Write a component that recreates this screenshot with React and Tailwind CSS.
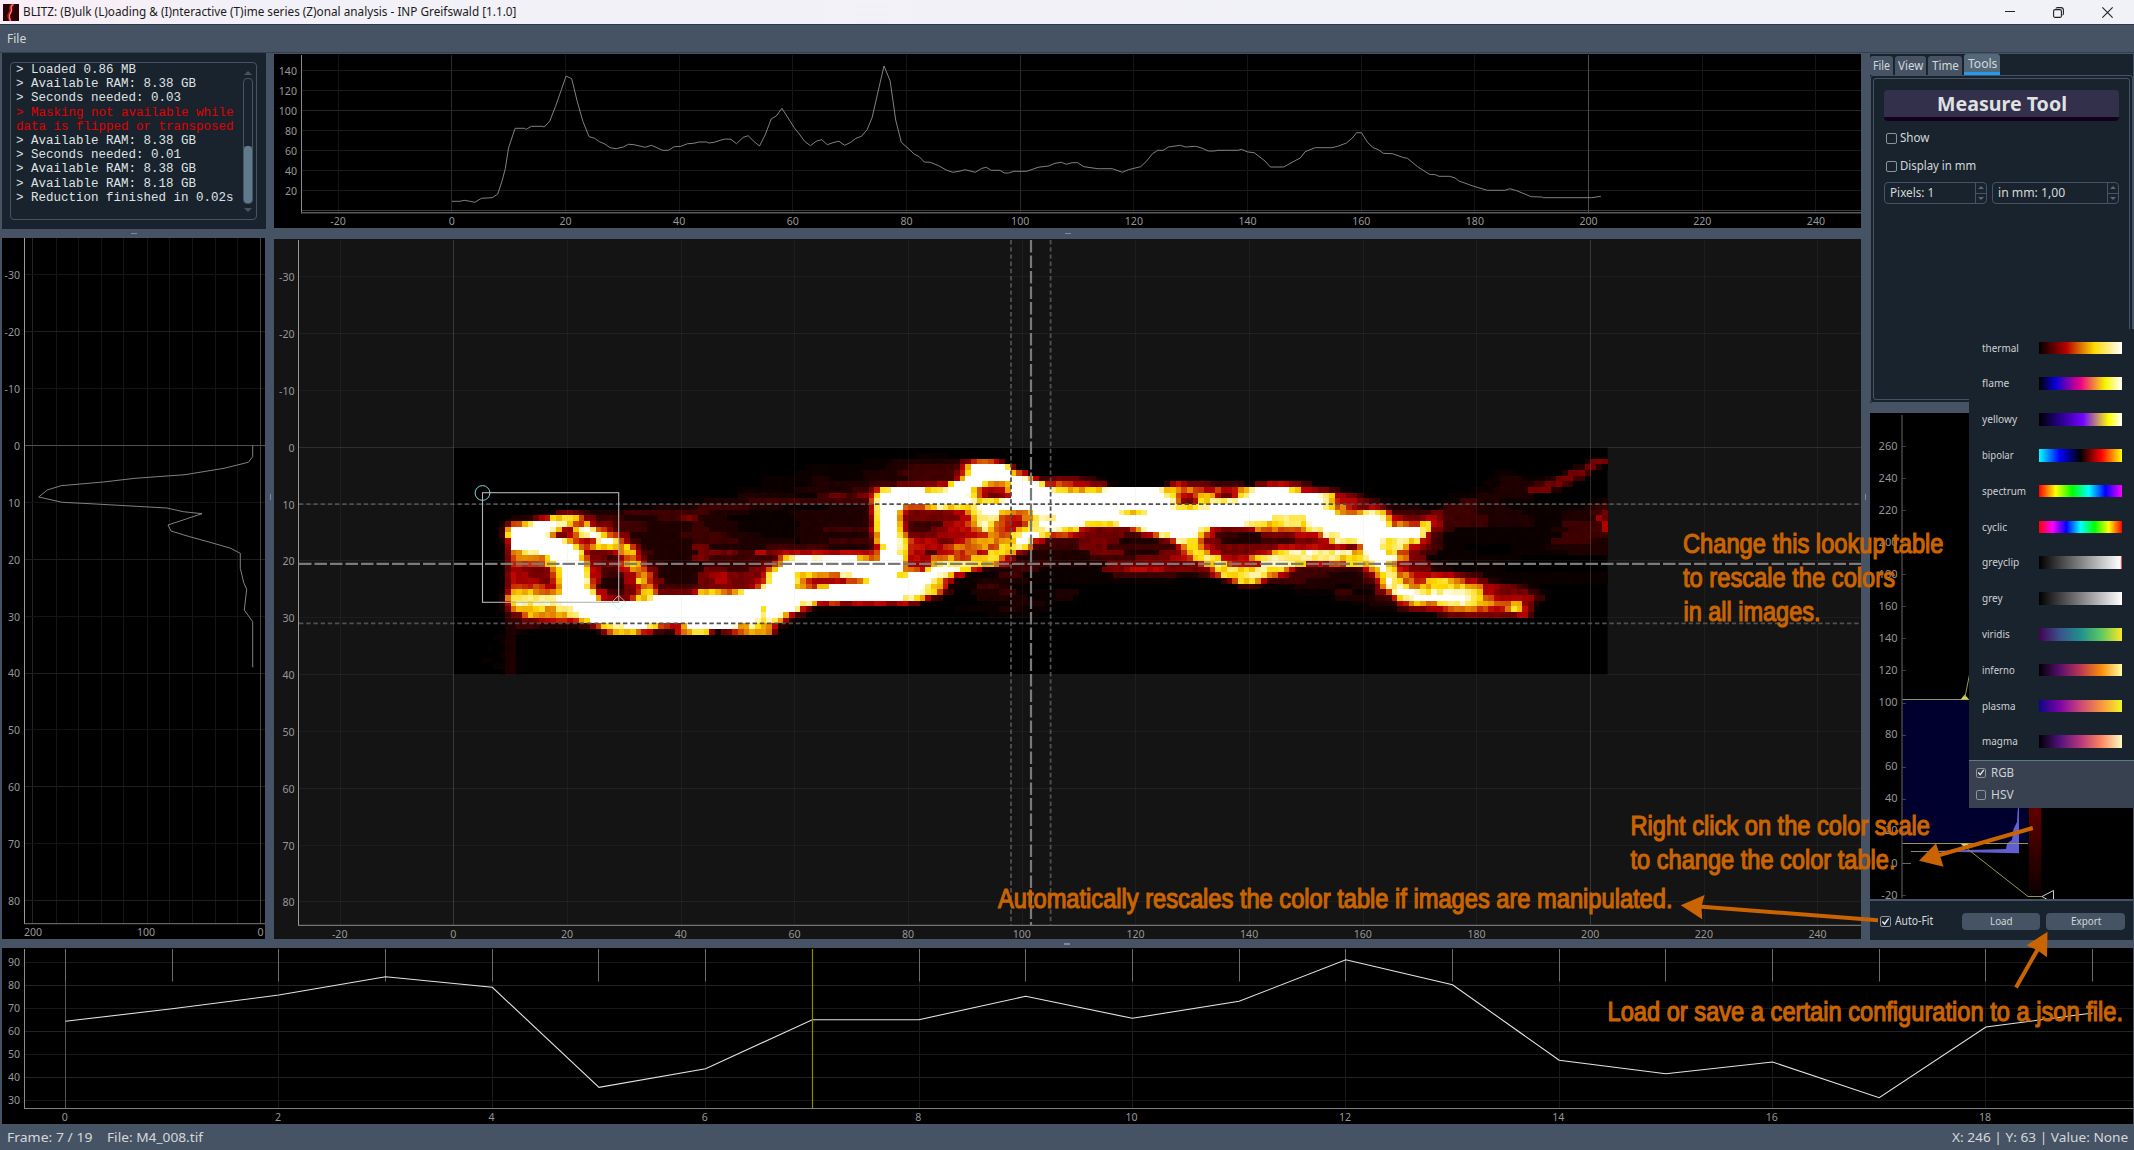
import React, { useLayoutEffect, useRef } from "react";

const UI = "'Noto Sans', 'Open Sans', sans-serif";

/* Text squeezed or stretched horizontally to a given pixel width. */
function Fit({ w, className = "", children }) {
  const ref = useRef(null);
  useLayoutEffect(() => {
    const el = ref.current;
    el.style.transform = "none";
    el.style.transform = `scaleX(${w / el.offsetWidth})`;
  }, [w]);
  return (
    <span className={"inline-block " + className} style={{ width: w }}>
      <span ref={ref} className="inline-block origin-left whitespace-pre">
        {children}
      </span>
    </span>
  );
}

const range = (a, b, s) => {
  const out = [];
  for (let v = a; v <= b; v += s) out.push(v);
  return out;
};

function Label({ x, y, anchor = "middle", fill = "#969696", size = 10.6, children }) {
  return (
    <text x={x} y={y + 3.9} textAnchor={anchor} fontSize={size} fill={fill} fontFamily={UI}>
      {children}
    </text>
  );
}

/* ---------- horizontal profile ---------- */
const H_A = [[376,484],[392,484],[400,481],[412,484],[421,487],[434,475],[455,473],[466,462],[475,420],[481,385],[487,324],[500,265],[518,265],[522,268],[532,259],[553,259],[557,261],[568,243],[579,200],[590,152],[600,108],[611,116],[622,185],[633,245],[645,290],[656,295],[665,305],[676,312],[686,323],[698,326],[712,321],[722,313],[733,314],[755,322],[767,316],[778,323],[789,331],[800,331],[812,320],[825,319],[838,311],[850,310],[860,306],[875,306],[880,309],[890,307],[902,301],[912,297],[923,298],[934,311],[947,292],[957,287],[967,303],[979,318],[990,285],[1002,237],[1012,228],[1023,205],[1035,234],[1047,263],[1057,282],[1068,305],[1079,317],[1090,304],[1101,299],[1112,314],[1125,307],[1135,304],[1146,316],[1158,307],[1168,295],[1179,289],[1190,269],[1200,232],[1212,150],[1223,78],[1235,122],[1246,240],[1257,307],[1270,325],[1282,342],[1292,350],[1302,366],[1314,367],[1330,377],[1345,390],[1358,397],[1370,394],[1382,389],[1402,397],[1415,385],[1424,382],[1433,391],[1450,391],[1459,399],[1467,399],[1478,394],[1503,394],[1525,382]];
const H_B = [[0,381],[16,378],[28,370],[40,367],[49,373],[60,368],[70,368],[82,380],[108,386],[135,386],[154,397],[165,389],[188,380],[198,365],[210,341],[220,331],[230,331],[240,321],[262,316],[272,321],[290,319],[302,324],[314,333],[325,333],[332,331],[370,331],[376,328],[388,336],[400,338],[420,363],[430,381],[455,381],[475,363],[486,354],[495,335],[514,323],[545,323],[556,319],[572,309],[583,294],[591,278],[600,278],[612,308],[622,323],[632,329],[641,340],[658,341],[677,352],[686,355],[705,380],[727,403],[738,404],[745,409],[765,409],[775,414],[782,423],[810,439],[835,451],[868,451],[877,446],[890,452],[917,470],[937,471],[940,473],[1030,473],[1047,469]];
const H_POINTS = [
  ...H_A.map(([x, y]) => [260 + x / 1.96, 40 + y / 3]),
  ...H_B.map(([x, y]) => [1040 + x / 1.867, 40 + y / 3]),
];
const toPts = (a) => a.map(([x, y]) => x.toFixed(1) + "," + y.toFixed(1)).join(" ");

function HorizontalProfile() {
  const X = (v) => 451.8 + v * 5.684;
  const Y = (v) => 210.4 - v;
  return (
    <svg className="block bg-black" width="1587" height="174" viewBox="274 54 1587 174">
      {range(20, 140, 20).map((v) => (
        <g key={v}>
          <path d={`M301 ${Math.round(Y(v)) + 0.5}H1861`} stroke={v === 100 ? "#262626" : "#1b1b1b"} />
          <Label x={297} y={Y(v) + 0.3} anchor="end">{v}</Label>
        </g>
      ))}
      {range(-20, 240, 20).map((v) => (
        <g key={v}>
          <path d={`M${Math.floor(X(v)) + 0.5} 55V213`} stroke={v === 200 ? "#4c4c4c" : v === 0 || v === 100 ? "#2a2a2a" : "#161616"} />
          <Label x={X(v)} y={221.4}>{v}</Label>
        </g>
      ))}
      <path d="M301 210.5H1861" stroke="#3c3c3c" />
      <path d="M301.5 55V213.5" stroke="#8a8a8a" />
      <path d="M301 212.7H1861" stroke="#585858" strokeWidth="1.4" />
      <polyline points={toPts(H_POINTS)} fill="none" stroke="#8e8e8e" strokeWidth="0.9" />
    </svg>
  );
}

/* ---------- vertical profile ---------- */
const V_POINTS = [[758,676],[758,710],[745,727],[672,745],[555,764],[405,775],[310,786],[183,797],[142,810],[116,831],[187,847],[270,851],[500,864],[550,875],[606,881],[504,915],[513,933],[565,949],[630,967],[690,984],[721,1000],[721,1045],[731,1088],[740,1108],[733,1170],[758,1205],[758,1342]].map(([x, y]) => [x / 3, 220 + y / 3]);

function VerticalProfile() {
  const Y = (v) => 445.4 + v * 5.69;
  return (
    <svg className="block bg-black" width="263" height="701" viewBox="2 238 263 701">
      {[32.7, 56.2, 78.7, 101, 123.3, 147.3, 169.3, 192.3, 215.3, 237.7].map((x) => (
        <path key={x} d={`M${Math.floor(x) + 0.5} 238V924`} stroke={x === 32.7 ? "#262626" : "#151515"} />
      ))}
      {range(-30, 80, 10).map((v) => (
        <g key={v}>
          <path d={`M25 ${Math.floor(Y(v)) + 0.5}H265`} stroke={v === 0 ? "#505050" : v % 20 === 0 ? "#1e1e1e" : "#141414"} />
          <Label x={20} y={Y(v) + 0.5} anchor="end">{v}</Label>
        </g>
      ))}
      <path d="M260.5 238V924" stroke="#484848" />
      <path d="M24.5 238V924" stroke="#9a9a9a" />
      <path d="M24 923.7H265" stroke="#7a7a7a" />
      <Label x={33} y={932.3}>200</Label>
      <Label x={146} y={932.3}>100</Label>
      <Label x={260.5} y={932.3}>0</Label>
      <polyline points={toPts(V_POINTS)} fill="none" stroke="#8e8e8e" strokeWidth="0.9" />
    </svg>
  );
}

/* ---------- image data: start column + intensity letter ---------- */
const LEVEL = { a: 0, b: 2, c: 5.5, d: 11, e: 21, f: 32, g: 41, h: 50, i: 59, j: 67, k: 85, w: 118 };
const ROWS = [
  "0a",
  "0a 81b 84b 87a",
  "0a 72b 77c 79c 89e 91g 92h 95f 96e 97a 199c 200e 202e",
  "0a 62b 76c 80d 89f 90i 91w 97j 98e 99a 197c 199e 201c 202a",
  "0a 60b 66b 72c 78d 88e 89g 90j 91w 98j 99h 100f 101a 183b 187a 195c 196e 199d 200a",
  "0a 54b 63c 66b 72c 80d 88f 89i 90w 100k 101j 102f 103d 105e 110d 113b 115a 182b 184c 188b 192c 194e 197d 199a",
  "0a 54b 63c 73d 76d 78e 85f 87i 88w 93i 94h 96h 97j 98w 103j 104f 105g 109f 112e 115b 117a 125c 126f 129e 133d 139b 141e 143f 147e 149d 151a 181b 184c 190d 192e 195d 197a",
  "0a 50b 60c 70d 73e 74g 75j 77w 83j 85k 87w 91i 92g 93f 97h 98w 105k 106j 108i 111j 114k 116w 124k 125i 128h 130g 132f 134h 135f 137f 138i 140k 141w 147j 149f 152e 154d 156b 158a 179b 183c 189e 193c 195a",
  "0a 50c 60b 64d 66e 69d 71e 73f 74j 75w 90k 91j 92h 93f 94e 97f 98w 125k 126j 127h 128f 130g 131j 132i 134f 135e 137f 138j 139k 140w 152k 154j 155f 157e 159d 160b 162a 175b 180c 184c 190a",
  "0a 40b 44c 52d 73g 74k 75w 91k 92j 96k 97w 126k 127h 128e 130f 131j 133k 138w 153k 154i 155f 159e 161d 163b 166a 174b 177d 180c 184b 190a 200b 202c",
  "0a 30b 35c 43d 52c 58b 66c 73f 74k 75w 79g 80g 83i 85k 87j 91k 93w 126k 127j 131k 133w 153k 154i 155h 157f 159e 161f 163e 164c 170b 174d 180c 186b 197b 199c 201d",
  "0a 14b 18e 22d 24c 30d 45c 52b 59c 64c 73f 74j 75w 78i 79f 80e 88f 90h 91k 93w 96j 98h 101j 102w 117k 118j 121k 122w 155j 156h 159i 160k 163j 164f 165d 170d 172e 174d 180c 188b 195c 200d 202e",
  "0a 10c 14e 15f 17j 21j 22g 23e 25d 30c 36d 40e 43c 48b 60c 73e 74j 75w 78h 79e 82e 86e 89f 91i 92k 95k 96g 98f 100h 102j 103k 106w 144k 149j 150w 163k 164i 165f 167e 169e 171f 173e 174d 182c 190b 195c 201f 202e",
  "0a 8b 9e 10h 12j 13k 14w 18k 20j 21g 23i 24f 25e 28d 34c 42d 44c 50b 61c 73e 74j 75w 78i 79f 80d 83d 86f 90h 92k 94k 95h 97f 100g 101j 103w 110k 111j 117w 139k 141j 146k 149i 150k 151w 164j 165g 166h 168g 170i 171k 172f 174d 182c 190b 195d 202f",
  "0a 8c 9i 10w 17k 18i 19f 20e 21i 22k 23w 24k 25g 27f 28d 34c 42d 45c 50b 60c 65d 73f 74j 75w 78i 79f 80d 84e 87f 91h 93k 94j 95g 98f 99j 101k 102k 104k 107j 110f 112e 119g 120i 121k 122w 131k 132j 133f 135e 140f 141h 145g 149h 150j 151k 153w 170k 171j 172e 174d 176b 190b 193c 196d 202f",
  "0a 8c 9j 10w 16k 17i 18e 20f 21h 22k 24w 25k 26i 27g 29e 31c 40d 48c 54b 60c 73e 74h 75w 78j 79h 80e 85f 92g 94i 96g 98j 99k 100w 103k 104j 105g 108f 110e 115e 118d 121f 123h 124k 126w 130k 131j 132g 133f 134d 138c 142e 148f 151f 152h 153k 156w 170k 171f 172d 174b 190b 195d",
  "0a 8b 9f 10w 19k 20i 21g 22f 25k 26w 28j 29h 30f 31d 33c 42d 50c 60b 61c 66d 74h 75w 78k 79i 80g 81f 85e 88f 90h 92i 95h 97j 99w 101k 102f 104d 110e 117c 124e 126g 127k 129j 131g 132e 135c 142d 148e 152f 154i 155k 158k 160w 163k 164j 166k 168j 169k 170f 172d 174b 190b 193d 200c",
  "0a 9e 10w 21j 22g 24h 25j 28i 30j 31g 32e 33c 42e 45c 55d 66c 73d 74f 75j 76w 78k 79j 80g 82f 86g 88i 90h 92i 94g 96j 98k 100j 101h 102d 110e 115d 124d 127f 128i 129j 131h 132f 134e 145f 149f 154f 157e 159g 160w 163k 164j 165k 167i 168f 170e 172d 174b 178a 186b 192c 200c",
  "0a 9e 10i 12k 15w 22j 23f 24e 28f 29i 31i 32f 33d 35c 43e 50d 53f 55e 57f 62f 68f 73g 75w 78k 79j 80f 83d 85f 88g 90h 92f 94j 96j 98i 99e 101c 105c 112e 118c 124e 127e 128g 129j 131j 132i 133f 135e 141f 144i 145j 147k 150w 151k 158i 160k 161w 164j 165k 166g 168e 170d 173b 180a 186b 196c",
  "0a 9e 10h 16i 17w 22j 23g 24e 27d 29f 30h 32g 33e 34c 42e 45d 54d 57g 58i 59k 60w 63k 65w 71i 72h 74g 75w 79i 80f 83f 84h 87i 88g 91i 94j 96h 97f 98e 99c 112d 120e 126f 128f 129g 130j 132k 134j 135f 138f 140h 141j 143k 152k 156j 160k 161w 165k 166h 168e 171b 188a",
  "0a 9e 10g 14g 16i 17j 18w 23h 24e 27e 29g 30j 31i 33f 34d 37c 44d 48d 54e 56g 57h 58w 79g 80f 83f 84j 85k 88k 90k 91j 95h 96f 98d 105c 115e 124e 127e 129e 131g 132j 134k 135j 136g 138f 141f 142k 146k 148j 150f 154g 157j 160j 162w 164j 165h 166f 168e 172c 175b 185a",
  "0a 9e 10f 12e 14e 17h 18j 19w 23j 24f 26d 29f 31i 32h 34e 36c 44e 48d 52e 55g 56i 57w 79h 81g 82f 83j 84w 88k 89j 91f 93c 98d 103b 114e 118f 125e 130e 133g 134j 136k 138j 140j 141k 143j 146h 147f 148d 155d 160f 161h 162j 163w 164k 165i 166f 168e 172c 176b 185a",
  "0a 9e 10f 13e 17g 18j 19w 23j 24f 26d 30f 32h 34g 35e 36c 43e 45f 48e 54f 55j 56w 60j 63i 65h 68k 70w 78j 80w 85k 87j 88f 90b 96d 100b 114b 116d 120d 127c 131d 133f 134g 135j 137j 139k 142j 143h 145f 147d 154c 160e 162i 163j 164k 166h 168g 169f 176e 178d 181b",
  "0a 9e 10f 15e 17f 18j 19w 23k 24f 26c 30f 32j 33j 34g 35e 37c 43e 46f 48e 53f 54g 55j 56w 60j 61i 62f 64f 69g 71h 72j 73w 84k 85j 86f 88b 92c 98c 101b 120b 127a 135d 136e 137g 138j 140j 141h 142f 143d 150c 160d 162f 163i 164w 165k 166j 167h 169g 171i 173j 176h 178f 180e 182c 184b",
  "0a 9e 10g 16f 18i 19w 23j 24g 25d 26c 30e 32f 33h 34i 35f 36d 43e 52f 53g 54k 55w 60i 62g 64i 65j 66w 83k 84j 86f 87b 92d 96c 98b 101a 138d 142b 148c 155b 158c 162e 163h 164k 166k 167j 168h 170i 172j 176j 178i 180h 181f 184e 187d 189b 191a",
  "0a 9f 10i 14h 17i 19w 24j 25f 27d 30e 32g 33j 35g 36e 42f 43i 45j 47h 49i 50j 51w 82k 84j 85g 86d 88a 91c 96d 99b 106c 110a 148b 155d 158b 162e 164g 165k 166w 169k 171j 172k 175k 179j 180i 181f 183e 189d 191b 193a",
  "0a 8b 9h 10k 13k 18w 25i 26f 28e 31g 32j 35w 79k 81j 83f 84d 86a 92c 98c 101b 106c 109a 155c 162d 165f 166j 167k 169w 178k 180j 181g 183f 190d 192a",
  "0a 8b 9f 10i 11k 13j 14k 19w 61k 63i 64f 66g 68e 70f 74f 76e 78f 80e 82b 84a 93b 98c 104b 106a 158b 161c 166f 167g 168i 171h 173j 174k 179k 180j 182h 185g 186j 188e 190c 191a",
  "0a 8b 9e 10h 11i 13j 16i 18k 21w 54j 55w 60k 61f 62e 63b 70a 88b 96c 100b 105a 160b 166d 168e 171f 174g 176h 180g 183f 185i 186j 188f 189e 190a",
  "0a 9d 10e 12g 13j 14i 18i 20k 22w 54k 55w 57k 58i 59f 60d 62a 94b 100b 103a 170b 173d 175e 178e 183e 187f 189d 190a",
  "0a 9d 12e 15f 18g 20f 21g 22j 24w 53k 54j 55k 57i 58f 59b 61a",
  "0a 9c 11d 15c 22d 24e 25g 26j 28k 30w 34k 35j 36g 38f 40i 41w 49k 50i 52k 53j 55h 56f 57c 59a",
  "0a 9c 11b 13a 25c 26e 27g 28i 32h 33f 35d 37c 39f 40h 41i 42k 44j 45e 46a 47e 49g 50h 52i 55h 56e 57a",
  "0a 7b 9c 11a 49b 54a",
  "0a 8b 9c 11a",
  "0a 6b 7a 9c 11a",
  "0a 8b 9c 11a",
  "0a 5b 7a 9c 11a",
  "0a 7b 9c 11a",
  "0a 9c 11a",
];

const hash = (x, y) => {
  const s = Math.sin(x * 127.1 + y * 311.7) * 43758.5453;
  return s - Math.floor(s);
};

function thermal(v) {
  const t = Math.max(0, Math.min(100, v)) / 100;
  const stops = [[0, 0, 0, 0], [1 / 3, 185, 0, 0], [2 / 3, 255, 220, 0], [1, 255, 255, 255]];
  for (let i = 1; i < 4; i++) {
    if (t <= stops[i][0] + 1e-9) {
      const a = stops[i - 1], b = stops[i];
      const k = (t - a[0]) / (b[0] - a[0]);
      return `rgb(${[1, 2, 3].map((j) => Math.round(a[j] + (b[j] - a[j]) * k)).join(",")})`;
    }
  }
  return "#fff";
}

const RUNS = (() => {
  const out = [];
  ROWS.forEach((row, r) => {
    const vals = new Array(203).fill(0);
    const keys = row.split(" ").map((s) => [parseInt(s, 10), LEVEL[s[s.length - 1]]]);
    keys.forEach(([c, v], i) => {
      const end = i + 1 < keys.length ? keys[i + 1][0] : 203;
      for (let x = c; x < end; x++) vals[x] = v;
    });
    const smooth = vals.map((v, x) => {
      const l = vals[Math.max(0, x - 1)], n = vals[Math.min(202, x + 1)];
      let s = v * 0.84 + l * 0.08 + n * 0.08;
      if (v === 0) return l > 0 || n > 0 ? s : 0;
      if (v < 100) s *= 0.88 + 0.24 * hash(x, r);
      return s;
    });
    let start = 0;
    let color = thermal(smooth[0]);
    for (let x = 1; x <= 203; x++) {
      const c = x < 203 ? thermal(smooth[x]) : null;
      if (c !== color) {
        if (color !== "rgb(0,0,0)") out.push([start, r, x - start, color]);
        start = x;
        color = c;
      }
    }
  });
  return out;
})();

function ImageView() {
  const P = 5.684;
  const X = (v) => 453.7 + v * P;
  const Y = (v) => 447.2 + v * P;
  return (
    <svg className="block bg-[#141414]" width="1587" height="700" viewBox="274 239 1587 700">
      <rect x={453.7} y={447.2} width={203 * P} height={40 * P} fill="#000" />
      <g shapeRendering="crispEdges">
        {RUNS.map(([c, r, n, color]) => (
          <rect key={c + "-" + r} x={X(c)} y={Y(r)} width={n * P} height={P} fill={color} />
        ))}
      </g>
      {range(-30, 80, 10).map((v) => (
        <g key={v}>
          <path d={`M299 ${Math.floor(Y(v)) + 0.5}H1861`} stroke="#969696" strokeOpacity={v === 0 ? 0.2 : v % 20 === 0 ? 0.1 : 0.07} />
          <Label x={294.5} y={Y(v) + 0.6} anchor="end">{v}</Label>
        </g>
      ))}
      {range(-20, 240, 20).map((v) => (
        <g key={v}>
          <path d={`M${Math.floor(X(v)) + 0.5} 240V925`} stroke="#969696" strokeOpacity={v === 0 || v === 200 ? 0.28 : 0.08} />
          <Label x={X(v) - 0.3} y={933.8}>{v}</Label>
        </g>
      ))}
      <path d="M298.5 240V925.5" stroke="#9a9a9a" />
      <path d="M298 925.3H1861" stroke="#8c8c8c" />
      <g stroke="#505050" strokeWidth="1.8" strokeDasharray="4.4 2.8">
        <path d="M299 504.1H1861" />
        <path d="M299 623.4H1861" />
        <path d="M1011 240V925" />
        <path d="M1050.6 240V925" />
      </g>
      <g stroke="#7a7a7a" strokeWidth="2.2" strokeDasharray="12.5 3">
        <path d="M299 563.8H1861" />
        <path d="M1031 240V925" />
      </g>
      <rect x="482.5" y="492.7" width="136.2" height="109.6" fill="none" stroke="#b4b4b4" strokeWidth="1.1" />
      <circle cx="482.5" cy="493" r="7.4" fill="none" stroke="#7fd8d8" strokeWidth="1" />
      <path d="M611.5 602.5L618.7 595.5L626 602.5" fill="none" stroke="#b4b4b4" />
      <path d="M611.5 602.5L618.7 609.5L626 602.5" fill="none" stroke="#b5ffff" />
    </svg>
  );
}

/* ---------- timeline ---------- */
const T_Y = [1021.3, 1008.7, 995, 976.7, 987.3, 1087.3, 1068.7, 1019.7, 1019.7, 996.3, 1018.3, 1001.3, 959.7, 984.7, 1060.3, 1073.7, 1062, 1097.7, 1027, 1013];

function Timeline() {
  const X = (v) => 65.5 + v * 106.69;
  const Y = (v) => 1100.3 - (v - 30) * 2.297;
  return (
    <svg className="block bg-black" width="2131" height="176" viewBox="2 948 2131 176">
      {range(30, 90, 10).map((v) => (
        <g key={v}>
          <path d={`M25 ${Math.floor(Y(v)) + 0.5}H2133`} stroke={v % 20 === 0 ? "#222" : "#171717"} />
          <Label x={20} y={Y(v)} anchor="end">{v}</Label>
        </g>
      ))}
      {T_Y.map((_, v) => (
        <g key={v}>
          {v % 2 === 0 && <path d={`M${Math.floor(X(v)) + 0.5} 949V1108`} stroke={v === 0 ? "#555" : "#191919"} />}
          <path d={`M${Math.floor(X(v)) + 0.5} 949V981.5`} stroke="#6c6c6c" />
          {v % 2 === 0 && <Label x={X(v) - 0.8} y={1117.2}>{v}</Label>}
        </g>
      ))}
      <path d="M24.5 949V1108.5" stroke="#8a8a8a" />
      <path d="M24 1108.5H2133" stroke="#808080" />
      <polyline points={toPts(T_Y.map((y, i) => [X(i), y]))} fill="none" stroke="#e4e4e4" strokeWidth="1.1" />
      <path d="M812.5 949V1108" stroke="#8c8c00" strokeWidth="1.2" />
    </svg>
  );
}

/* ---------- histogram ---------- */
function Histogram() {
  const Y = (v) => 862.6 - v * 1.601;
  return (
    <svg className="block bg-black" width="263" height="486" viewBox="1870 413 263 486">
      <defs>
        <linearGradient id="bar" x1="0" y1="0" x2="0" y2="1">
          <stop offset="0" stopColor="#680000" />
          <stop offset="1" stopColor="#0c0000" />
        </linearGradient>
      </defs>
      <rect x="1902" y="700" width="126" height="143.5" fill="#00002e" />
      <path d="M2019 800L2017.5 812L2017 822L2013.5 829L2012 840L2007 843.5L2006 849L1921 851.3L2019 853.2Z" fill="#5f5fd2" />
      <path d="M1911 851.5H1945" stroke="#86868f" />
      <path d="M1902 699.5H2028M1902 843.5H2028" stroke="#96964a" strokeWidth="1.2" />
      <path d="M1960.5 699.5L1964.8 694.5L1969 699.5Z" fill="#d2d25c" />
      <path d="M1960.5 843.5L1965 848L1969.5 843.5Z" fill="#d2d25c" />
      <path d="M1965 697L1970 672M1965 847L2028 896.5H2042" fill="none" stroke="#96964a" />
      <rect x="2029" y="800" width="12.3" height="95" fill="url(#bar)" />
      <path d="M2042 896.5L2053.5 890.5V903Z" fill="none" stroke="#ccc" />
      {range(-20, 260, 20).map((v) => (
        <g key={v}>
          <path d={`M1902 ${Math.round(Y(v)) + 0.5}H${v === 0 ? 1911 : 1906}`} stroke={v === 0 ? "#6a6a6a" : "#404040"} />
          <Label x={1897.5} y={Y(v)} anchor="end" size={11}>{v}</Label>
        </g>
      ))}
      <path d="M1902 415V898" stroke="#505050" strokeWidth="1.3" />
    </svg>
  );
}

/* ---------- widgets ---------- */
function Check({ on, size = "size-[11px]" }) {
  return (
    <span className={"inline-flex shrink-0 items-center justify-center rounded-[2px] border border-[#8b939b] " + size}>
      {on && (
        <svg viewBox="0 0 10 10" className="size-[9px]">
          <path d="M1.5 5L4 7.8L8.5 1.6" fill="none" stroke="#e8eaec" strokeWidth="1.6" />
        </svg>
      )}
    </span>
  );
}

function Spin({ box, w, text }) {
  return (
    <div className={"flex h-[22px] items-center rounded border border-[#455364] pl-[5px] text-[12px] " + box}>
      <Fit w={w}>{text}</Fit>
      <div className="ml-auto flex h-full w-[11px] flex-col border-l border-[#455364] text-[#54687a]">
        <div className="flex flex-1 items-center justify-center border-b border-[#455364]">
          <svg viewBox="0 0 6 3" className="w-[6px]"><path d="M0 3L3 0L6 3Z" fill="currentColor" /></svg>
        </div>
        <div className="flex flex-1 items-center justify-center">
          <svg viewBox="0 0 6 3" className="w-[6px]"><path d="M0 0L3 3L6 0Z" fill="currentColor" /></svg>
        </div>
      </div>
    </div>
  );
}

const LOG = [
  "> Loaded 0.86 MB",
  "> Available RAM: 8.38 GB",
  "> Seconds needed: 0.03",
  "!> Masking not available while",
  "!data is flipped or transposed",
  "> Available RAM: 8.38 GB",
  "> Seconds needed: 0.01",
  "> Available RAM: 8.38 GB",
  "> Available RAM: 8.18 GB",
  "> Reduction finished in 0.02s",
];

function LogDock() {
  return (
    <div className="flex h-[176px] w-[264px] bg-[#19232d] pt-[9px] pl-2">
      <div className="flex h-[158px] w-[247px] justify-between rounded border border-[#455364] pr-[3px] pl-[5px]">
        <div className="font-['Liberation_Mono','DejaVu_Sans_Mono',monospace] text-[12.5px] leading-[14.2px] whitespace-pre text-[#dfe1e2]">
          {LOG.map((l, i) => (
            <div key={i} className={l[0] === "!" ? "text-[#e00000]" : ""}>{l.replace("!", "")}</div>
          ))}
        </div>
        <div className="flex w-[11px] flex-col items-center pt-[8px]">
          <svg viewBox="0 0 8 4" className="mb-[3px] w-2"><path d="M0 4L4 0L8 4Z" fill="#455364" /></svg>
          <div className="flex h-[126px] w-[10px] flex-col justify-end rounded-[4px] border border-[#455364]">
            <div className="h-[57px] rounded-[3px] bg-[#60798b]" />
          </div>
          <svg viewBox="0 0 8 4" className="mt-[4px] w-2"><path d="M0 0L4 4L8 0Z" fill="#455364" /></svg>
        </div>
      </div>
    </div>
  );
}

const TABS = [
  ["File", "w-[23px]", 17],
  ["View", "w-[31px]", 25],
  ["Time", "w-[34px]", 27],
];

function ToolsDock() {
  return (
    <div className="flex h-[349px] flex-col bg-[#19232d] text-[#d4d7da]">
      <div className="flex h-[21px] items-end gap-[2px] text-[12.5px] leading-none">
        {TABS.map(([t, c, w]) => (
          <div key={t} className={"flex h-[19px] items-center justify-center rounded-t-[3px] bg-[#455364] pt-px " + c}>
            <Fit w={w}>{t}</Fit>
          </div>
        ))}
        <div className="flex h-[21px] w-[36px] items-center justify-center rounded-t-[3px] border-b-[3px] border-[#259ae9] bg-[#54687a] pt-[2px]">
          <Fit w={29}>Tools</Fit>
        </div>
      </div>
      <div className="flex-1 rounded-[3px] border border-[#455364] p-[2px]">
        <div className="flex h-full flex-col rounded-[3px] border border-[#455364] px-[10px] pt-[11px]">
          <div className="flex h-[31px] items-center justify-center rounded-[4px] border-b-4 border-[#13001d] bg-[#33304c] pt-px text-[19px] font-bold text-[#dfe1e2]">
            <Fit w={130}>Measure Tool</Fit>
          </div>
          <div className="mt-[8px] flex h-[18px] items-center gap-[3px] pl-[2px] text-[12px]">
            <Check />
            <Fit w={29}>Show</Fit>
          </div>
          <div className="mt-[10px] flex h-[18px] items-center gap-[3px] pl-[2px] text-[12px]">
            <Check />
            <Fit w={76}>Display in mm</Fit>
          </div>
          <div className="mt-[7px] flex gap-[5px]">
            <Spin box="w-[103px]" w={44} text="Pixels: 1" />
            <Spin box="w-[127px]" w={67} text="in mm: 1,00" />
          </div>
        </div>
      </div>
    </div>
  );
}

const MAPS = [
  ["thermal", 37, "bg-[linear-gradient(to_right,#000,#b90000_33%,#ffdc00_67%,#fff)]"],
  ["flame", 27, "bg-[linear-gradient(to_right,#000,#0700dc_20%,#ec0086_50%,#f6f600_80%,#fff)]"],
  ["yellowy", 35, "bg-[linear-gradient(to_right,#000,#200081_23%,#7303ff_53%,#ffff00_84%,#fff)]"],
  ["bipolar", 32, "bg-[linear-gradient(to_right,#0ff,#00f_25%,#000_50%,#f00_75%,#ff0)]"],
  ["spectrum", 44, "bg-[linear-gradient(to_right,#f00,#ff0_20%,#0f0_40%,#0ff_60%,#00f_80%,#f0f)]"],
  ["cyclic", 25, "bg-[linear-gradient(to_right,#f00,#f0f_16%,#00f_33%,#0ff_50%,#0f0_67%,#ff0_84%,#f00)]"],
  ["greyclip", 37, "bg-[linear-gradient(to_right,#000,#fff_98%,#f00)]"],
  ["grey", 21, "bg-[linear-gradient(to_right,#000,#fff)]"],
  ["viridis", 28, "bg-[linear-gradient(to_right,#440154,#3a528b_25%,#20908d_50%,#5dc862_75%,#fde724)]"],
  ["inferno", 33, "bg-[linear-gradient(to_right,#000003,#570f6d_25%,#bb3754_50%,#f98c0a_75%,#fcfea4)]"],
  ["plasma", 34, "bg-[linear-gradient(to_right,#0c0786,#7d03a7_25%,#cb4777_50%,#f89441_75%,#eff821)]"],
  ["magma", 36, "bg-[linear-gradient(to_right,#000003,#51127c_25%,#b6367a_50%,#fb8660_75%,#fbfcbf)]"],
];

function GradientMenu() {
  return (
    <div className="absolute top-[329px] left-[1969px] flex w-[165px] flex-col bg-[#19232d] pt-px text-[11px] text-[#cdd0d3]">
      <div className="flex flex-col">
        {MAPS.map(([name, w, bg]) => (
          <div key={name} className="flex h-[35.8px] items-center justify-between pr-[12px] pl-[13px]">
            <Fit w={w}>{name}</Fit>
            <div className={"h-[12.5px] w-[83.5px] " + bg} />
          </div>
        ))}
      </div>
      <div className="flex h-[48px] flex-col justify-around border-t border-[#60798b] bg-[#37414f] py-[1px] pl-[7px] text-[12px]">
        <div className="flex items-center gap-[5px]"><Check on size="size-[10px]" /><Fit w={23}>RGB</Fit></div>
        <div className="flex items-center gap-[5px]"><Check size="size-[10px]" /><Fit w={23}>HSV</Fit></div>
      </div>
    </div>
  );
}

function Note({ x, y, w, children }) {
  return (
    <text x={x} y={y - 0.6} textLength={w} lengthAdjust="spacingAndGlyphs" fontSize="27" fill="#c96400" stroke="#c96400" strokeWidth="1.2" fontFamily="'Liberation Sans', Arial, sans-serif">
      {children}
    </text>
  );
}

function Annotations() {
  return (
    <svg className="pointer-events-none absolute inset-0" width="2134" height="1150" viewBox="0 0 2134 1150">
      <Note x={1683} y={553.5} w={260.5}>Change this lookup table</Note>
      <Note x={1683} y={587.2} w={212}>to rescale the colors</Note>
      <Note x={1683.5} y={621.5} w={137}>in all images.</Note>
      <Note x={1630.5} y={835.5} w={299.5}>Right click on the color scale</Note>
      <Note x={1630.5} y={869.3} w={265}>to change the color table.</Note>
      <Note x={998} y={909} w={674.5}>Automatically rescales the color table if images are manipulated.</Note>
      <Note x={1607.5} y={1022} w={515.5}>Load or save a certain configuration to a json file.</Note>
      <g fill="#c96400" stroke="none">
        <path d="M1919 860.7L1936 843.3L1939.5 854L1943.5 866.7Z" />
        <path d="M1680.7 905.2L1704.6 895L1701.5 906.5L1702.2 919.3Z" />
        <path d="M2047.5 931.7L2026.5 945.3L2037 950L2047 957.3Z" />
      </g>
      <g stroke="#c96400" strokeWidth="4" fill="none">
        <path d="M2032.8 828L1936 856" />
        <path d="M1878 920.3L1699 906.5" />
        <path d="M2016 987.5L2039 947" />
      </g>
    </svg>
  );
}

function Grip({ vertical }) {
  return <span className={"block bg-[#7d8a98] " + (vertical ? "h-[6px] w-px" : "h-[1.5px] w-[6px]")} />;
}

export default function App() {
  return (
    <div className="relative flex h-[1150px] w-[2134px] flex-col overflow-hidden bg-[#455364] text-[#d4d7da]" style={{ fontFamily: UI }}>
      <header className="flex h-6 items-center bg-[linear-gradient(to_right,#f9eef6,#f2f1f7_12%,#f0f2f7)] pl-[3px] text-[12.5px] text-[#1b1b1b]">
        <svg viewBox="0 0 16 17" className="h-[17px] w-4">
          <rect width="16" height="17" fill="#2a0304" />
          <path d="M10.500 0C5 3 9.500 5 7.500 8S5 12 7.500 17" fill="none" stroke="#c01818" strokeWidth="3" />
          <path d="M10.500 0C6 3 9.500 5 8 8S5.500 12 7.500 17" fill="none" stroke="#ffb0a0" strokeWidth="0.9" />
        </svg>
        <Fit w={493} className="ml-[4px]">BLITZ: (B)ulk (L)oading &amp; (I)nteractive (T)ime series (Z)onal analysis - INP Greifswald [1.1.0]</Fit>
        <div className="mr-[21px] ml-auto flex items-center gap-[38px]">
          <svg viewBox="0 0 10 10" className="size-[10px]"><path d="M0 4.500H10" stroke="#222" /></svg>
          <svg viewBox="0 0 11 11" className="size-[11px]" fill="none" stroke="#222" strokeWidth="1.100">
            <rect x="0.600" y="2.600" width="7.800" height="7.800" rx="1.500" />
            <path d="M3 1.600Q3 .6 4.500 .6H8Q10.400 .6 10.400 3V6.500Q10.400 8 9.400 8" />
          </svg>
          <svg viewBox="0 0 10 10" className="size-[11px]"><path d="M.3 .3L9.700 9.700M9.700 .3L.3 9.700" stroke="#222" /></svg>
        </div>
      </header>
      <nav className="flex h-[29px] items-center border-t border-b border-t-[#2c3947] border-b-[#33414f] pt-px pl-[7px] text-[12px]">
        <Fit w={19}>File</Fit>
      </nav>
      <main className="flex h-[887px] pl-[2px]">
        <section className="flex w-[264px] flex-col">
          <LogDock />
          <div className="flex h-[9px] items-center justify-center"><Grip /></div>
          <VerticalProfile />
        </section>
        <div className="flex w-[8px] items-center justify-center"><Grip vertical /></div>
        <section className="flex w-[1587px] flex-col pt-px">
          <HorizontalProfile />
          <div className="flex h-[11px] items-center justify-center"><Grip /></div>
          <ImageView />
        </section>
        <div className="flex w-[9px] items-center justify-center"><Grip vertical /></div>
        <section className="flex w-[263px] flex-col pt-px">
          <ToolsDock />
          <div className="h-[10px]" />
          <Histogram />
          <div className="flex h-[41px] items-center border-t-2 border-[#455364] bg-[#19232d] pt-px pr-2 pl-[10px] text-[12px]">
            <Check on />
            <Fit w={38} className="ml-[4px]">Auto-Fit</Fit>
            <div className="ml-auto flex gap-[6px]">
              <button className="flex h-[17px] w-[78px] items-center justify-center rounded-[4px] bg-[#455364] text-[11.5px]"><Fit w={23}>Load</Fit></button>
              <button className="flex h-[17px] w-[79px] items-center justify-center rounded-[4px] bg-[#455364] text-[11.5px]"><Fit w={30}>Export</Fit></button>
            </div>
          </div>
        </section>
      </main>
      <div className="flex h-[8px] items-center justify-center"><Grip /></div>
      <div className="pl-[2px]"><Timeline /></div>
      <footer className="flex h-[26px] items-center pt-[2px] pr-[6px] pl-[7px] text-[13px]">
        <Fit w={85}>Frame: 7 / 19</Fit>
        <Fit w={96} className="ml-[15px]">File: M4_008.tif</Fit>
        <Fit w={176} className="ml-auto">X: 246 | Y: 63 | Value: None</Fit>
      </footer>
      <GradientMenu />
      <Annotations />
    </div>
  );
}
